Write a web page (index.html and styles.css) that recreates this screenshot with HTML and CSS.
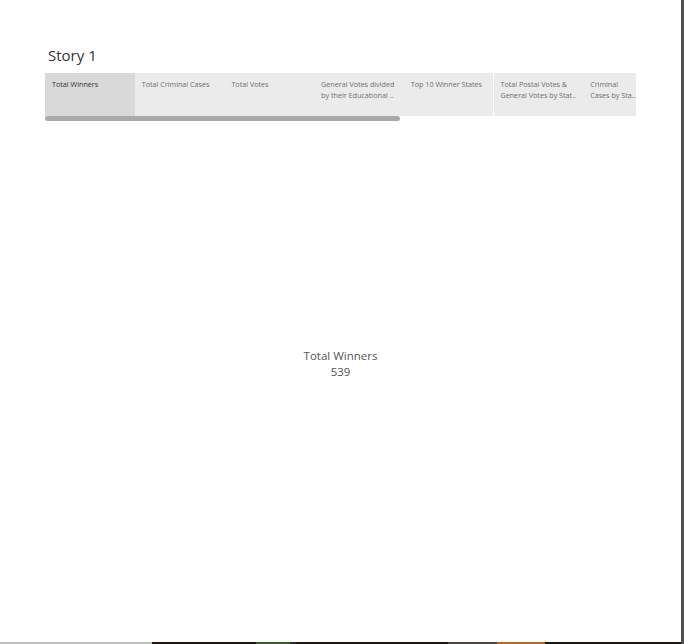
FILE: index.html
```html
<!DOCTYPE html>
<html>
<head>
<meta charset="utf-8">
<link rel="stylesheet" href="styles.css">
</head>
<body>
<div class="page">
  <div class="main">
    <h1 class="title">Story 1</h1>
    <div class="navigator">
      <div class="tabs">
        <div class="tab active">Total Winners</div>
        <div class="tab">Total Criminal Cases</div>
        <div class="tab">Total Votes</div>
        <div class="tab">General Votes divided<br>by their Educational ..</div>
        <div class="tab">Top 10 Winner States</div>
        <div class="tab divided">Total Postal Votes &amp;<br>General Votes by Stat..</div>
        <div class="tab last">Criminal<br>Cases by Sta..</div>
      </div>
      <div class="scroll"><div class="thumb"></div></div>
    </div>
    <div class="story">
      <div class="kpi">
        <div>Total Winners</div>
        <div>539</div>
      </div>
    </div>
    <div class="strip">
      <span class="seg s1"></span>
      <span class="seg s2"></span>
      <span class="seg s3"></span>
      <span class="seg s4"></span>
      <span class="seg s5"></span>
      <span class="seg s6"></span>
      <span class="seg s7"></span>
      <span class="seg s8"></span>
    </div>
  </div>
  <div class="edge"></div>
</div>
</body>
</html>
```
FILE: styles.css
```css
html, body {
  margin: 0;
  padding: 0;
  background: #ffffff;
}
.page {
  display: flex;
  width: 684px;
  height: 644px;
  overflow: hidden;
}
.main {
  flex: 1;
  display: flex;
  flex-direction: column;
  min-width: 0;
}
.title {
  margin: 45px 0 8px 48px;
  font-family: "Open Sans", sans-serif;
  font-weight: 400;
  font-size: 15px;
  line-height: 20px;
  color: #333333;
}
.navigator {
  margin-left: 45px;
  width: 591px;
}
.tabs {
  display: flex;
  height: 43px;
  overflow: hidden;
}
.tab {
  flex: 0 0 89.7px;
  box-sizing: border-box;
  padding: 6px 4px 0 7px;
  background: #ebebeb;
  font-family: "Open Sans", sans-serif;
  font-size: 7.2px;
  line-height: 11px;
  color: #6e6e6e;
  white-space: nowrap;
}
.tab.active {
  background: #d9d9d9;
  color: #333333;
}
.tab.divided {
  border-left: 1px solid #ffffff;
  padding-left: 6px;
}
.tab.last {
  flex: 1 0 auto;
}
.scroll {
  height: 5px;
}
.thumb {
  width: 355px;
  height: 5px;
  border-radius: 3px;
  background: #a9a9a9;
}
.story {
  flex: 1;
  display: flex;
  align-items: center;
  justify-content: center;
  padding-bottom: 36px;
}
.kpi {
  text-align: center;
  font-family: "Open Sans", sans-serif;
  font-size: 11.5px;
  line-height: 16px;
  color: #555555;
}
.strip {
  display: flex;
  height: 2px;
}
.seg { display: block; height: 2px; }
.s1 { width: 152px; background: #bdbdbd; }
.s2 { width: 104px; background: #1c1714; }
.s3 { width: 34px; background: #3b5e2b; }
.s4 { width: 6px; background: #2e2a2b; }
.s5 { width: 152px; background: #1c1714; }
.s6 { width: 49px; background: #4a4646; }
.s7 { width: 48px; background: #b5692b; }
.s8 { flex: 1; background: #1c1714; }
.edge {
  width: 3px;
  background: #505050;
}
```
